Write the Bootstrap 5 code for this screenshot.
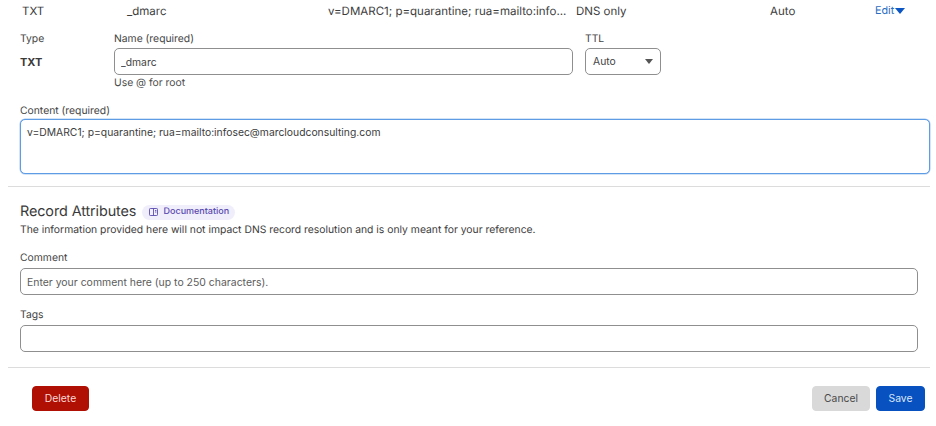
<!DOCTYPE html>
<html lang="en">
<head>
<meta charset="utf-8">
<title>DNS record</title>
<link href="https://cdn.jsdelivr.net/npm/bootstrap@5.3.0/dist/css/bootstrap.min.css" rel="stylesheet">
<style>
body{font-family:"Inter","Liberation Sans",sans-serif;font-size:10.35px;line-height:14px;color:#3a3a3a;background:#fff;width:936px;height:426px;overflow:hidden;text-rendering:geometricPrecision}
.rec-row{height:22px;align-items:center;color:#3c3c3c;font-size:11.5px}
.rec-row>span{display:block;white-space:nowrap}
.c1{margin-left:22px;width:105px}.c2{width:201px}.c3{width:248px}.c4{width:194px}.c5{width:105px}
.edit-link{color:#2c6cc0;text-decoration:none;font-size:10.8px}
.edit-link svg{vertical-align:0;margin-left:1px}
.form-area{padding:10px 0 0 20px}
.lbl{display:block;margin:0 0 2px;height:14px;color:#444;font-size:10.35px}
.col-type{width:94px}
.col-name{width:459px;margin-right:12px}
.col-ttl{width:76px}
.type-val{font-weight:700;font-size:11px;line-height:29px;color:#3a3a3a}
.fld{height:27px;border:1px solid #8f8f8f;border-radius:5px;padding:1px 6px 0;font-size:10.35px;line-height:25px;color:#444;box-shadow:none;min-height:0}
.fld::placeholder{color:#5c5c5c;opacity:1;font-size:10.45px}
.sel{height:27px;border:1px solid #8f8f8f;border-radius:5px;padding:1px 7px 0;font-size:10.35px;color:#444;background-image:none}
.sel-wrap{position:relative}
.sel-wrap svg{position:absolute;right:8px;top:11px;pointer-events:none}
.hint{margin-top:1px;color:#4c4c4c;font-size:10.35px;height:14px}
.content-lbl{margin-top:14px;margin-bottom:1px}
.ta{width:910px;height:55px;border:1px solid #5f9ce6;border-radius:5px;padding:5px 6px;font-size:10.35px;line-height:14px;color:#3c3c3c;resize:none;box-shadow:0 0 0 .5px #a9c9f0;display:block}
.sep{border:0;border-top:1px solid #dcdcdc;opacity:1;margin:0 6px 0 8px}
.sep1{margin-top:12px}
.attr-head{margin:15px 0 0 20px;height:20px;align-items:center}
.attr-title{font-size:14.4px;font-weight:400;margin:0;color:#3a3a3a;line-height:20px;letter-spacing:-.1px}
.doc-pill{margin-left:6px;height:15px;width:93px;border-radius:8px;background:#f0eefb;color:#5a4bb0;font-size:9px;font-weight:500;display:inline-flex;align-items:center;justify-content:center;gap:6px;padding:0}
.attr-desc{margin:1px 0 0 20px;color:#3c3c3c;font-size:10.35px;height:14px}
.fld-wide{width:898px;margin-left:20px}
.lbl-wide{margin:14px 0 3px 20px}
.lbl-tags{margin:13px 0 3px 20px}
.sep2{margin-top:15px}
.actions{padding:18px 11px 0 32px}
.act{height:25px;padding:0;font-size:10.35px;line-height:23px;border-radius:4px}
.act-del{width:57px;background:#b00f04;border-color:#b00f04;color:#f6d9d6}
.act-can{width:58px;background:#d9d9d9;border-color:#d9d9d9;color:#4a4a4a}
.act-sav{width:49px;background:#0751c0;border-color:#0751c0;color:#dbe7fa}
.act-gap{gap:6px}
</style>
</head>
<body>
<div class="d-flex rec-row">
  <span class="c1">TXT</span><span class="c2">_dmarc</span><span class="c3">v=DMARC1; p=quarantine; rua=mailto:info...</span><span class="c4">DNS only</span><span class="c5">Auto</span>
  <a class="edit-link" href="#">Edit<svg width="10" height="6" viewBox="0 0 10 6"><path d="M0 0h10L5 6z" fill="#0b55c4"/></svg></a>
</div>
<div class="form-area">
  <div class="d-flex">
    <div class="col-type"><span class="lbl">Type</span><div class="type-val">TXT</div></div>
    <div class="col-name">
      <label class="lbl" for="nm">Name (required)</label>
      <input id="nm" class="form-control fld" value="_dmarc">
      <div class="hint">Use @ for root</div>
    </div>
    <div class="col-ttl">
      <label class="lbl" for="tt">TTL</label>
      <div class="sel-wrap">
        <select id="tt" class="form-select sel"><option>Auto</option></select>
        <svg width="8" height="5" viewBox="0 0 8 5"><path d="M0 0h8L4 5z" fill="#555"/></svg>
      </div>
    </div>
  </div>
  <label class="lbl content-lbl" for="ct">Content (required)</label>
  <textarea id="ct" class="form-control ta">v=DMARC1; p=quarantine; rua=mailto:infosec@marcloudconsulting.com</textarea>
</div>
<hr class="sep sep1">
<div class="d-flex attr-head">
  <h2 class="attr-title">Record Attributes</h2>
  <span class="doc-pill">
    <svg width="9" height="8" viewBox="0 0 9 8" fill="none" stroke="#5a4bb0" stroke-width=".9"><rect x=".5" y=".5" width="8" height="7" rx=".8"/><path d="M4.5 .5v7M6 2.5h1.4M6 4h1.4"/></svg>Documentation
  </span>
</div>
<p class="attr-desc">The information provided here will not impact DNS record resolution and is only meant for your reference.</p>
<label class="lbl lbl-wide" for="cm">Comment</label>
<input id="cm" class="form-control fld fld-wide" placeholder="Enter your comment here (up to 250 characters).">
<label class="lbl lbl-tags" for="tg">Tags</label>
<input id="tg" class="form-control fld fld-wide">
<hr class="sep sep2">
<div class="d-flex justify-content-between actions">
  <button class="btn act act-del">Delete</button>
  <div class="d-flex act-gap"><button class="btn act act-can">Cancel</button><button class="btn act act-sav">Save</button></div>
</div>
</body>
</html>
